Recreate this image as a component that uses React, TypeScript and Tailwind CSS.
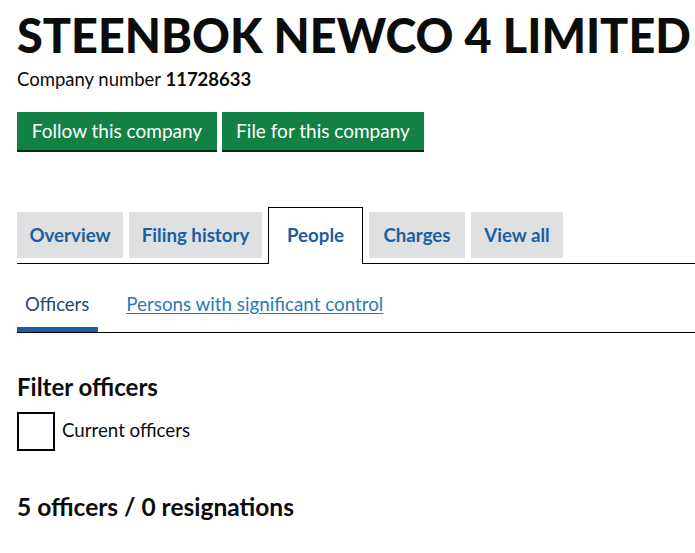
export default function App() {
  const tabs = [
    { label: 'Overview', active: false, width: 'w-[106px]' },
    { label: 'Filing history', active: false, width: 'w-[133px]' },
    { label: 'People', active: true, width: 'w-[95px]' },
    { label: 'Charges', active: false, width: 'w-[96px]' },
    { label: 'View all', active: false, width: 'w-[92px]' },
  ]

  return (
    <div className="min-h-[553px] bg-white pl-[17px] text-[#0b0c0c]" style={{ fontFamily: 'Lato, "Open Sans", sans-serif' }}>
      {/* Heading */}
      <h1 className="pt-[10px] text-[46.8px] font-black leading-[50px] whitespace-nowrap">
        STEENBOK NEWCO 4 LIMITED
      </h1>
      <p className="mt-[9px] text-[18.5px] leading-[20px]">
        Company number <strong className="font-bold">11728633</strong>
      </p>

      {/* Actions */}
      <div className="mt-[23px] flex gap-[5px]">
        <button className="h-[38px] w-[200px] bg-[#138044] text-[19px] text-white shadow-[0_2px_0_#002d18]">
          Follow this company
        </button>
        <button className="h-[38px] w-[202px] bg-[#138044] text-[19px] text-white shadow-[0_2px_0_#002d18]">
          File for this company
        </button>
      </div>

      {/* Main tabs */}
      <div className="mt-[57px] flex items-end gap-[6px] border-b border-black">
        {tabs.map((tab) =>
          tab.active ? (
            <div
              key={tab.label}
              className={`-mb-px flex h-[57px] items-center justify-center border border-b-0 border-black bg-white pb-[2px] text-[18.7px] font-bold text-[#1d5ea0] ${tab.width}`}
            >
              {tab.label}
            </div>
          ) : (
            <div
              key={tab.label}
              className={`mb-[5px] flex h-[46px] items-center justify-center bg-[#dee0e2] text-[18.7px] font-bold text-[#1d5ea0] ${tab.width}`}
            >
              {tab.label}
            </div>
          )
        )}
      </div>

      {/* Sub tabs */}
      <div className="mt-[29px] flex border-b border-black">
        <div className="border-b-[5px] border-[#1d5ea0] pl-[8px] pr-[9px] pb-[12px] text-[18.5px] leading-[22px] text-[#23496e]">
          Officers
        </div>
        <a href="#" className="ml-[28px] text-[18.8px] leading-[22px] text-[#2b7bb9] underline underline-offset-2">
          Persons with significant control
        </a>
      </div>

      {/* Filter */}
      <h2 className="mt-[41px] text-[24px] font-bold leading-[26px]">Filter officers</h2>
      <label className="mt-[12px] flex items-center gap-[7px]">
        <span className="block h-[39px] w-[38px] border-2 border-black bg-white" />
        <span className="pb-[2px] text-[18.7px]">Current officers</span>
      </label>

      <h2 className="mt-[42px] text-[24.5px] font-bold leading-[28px]">5 officers / 0 resignations</h2>
    </div>
  )
}
